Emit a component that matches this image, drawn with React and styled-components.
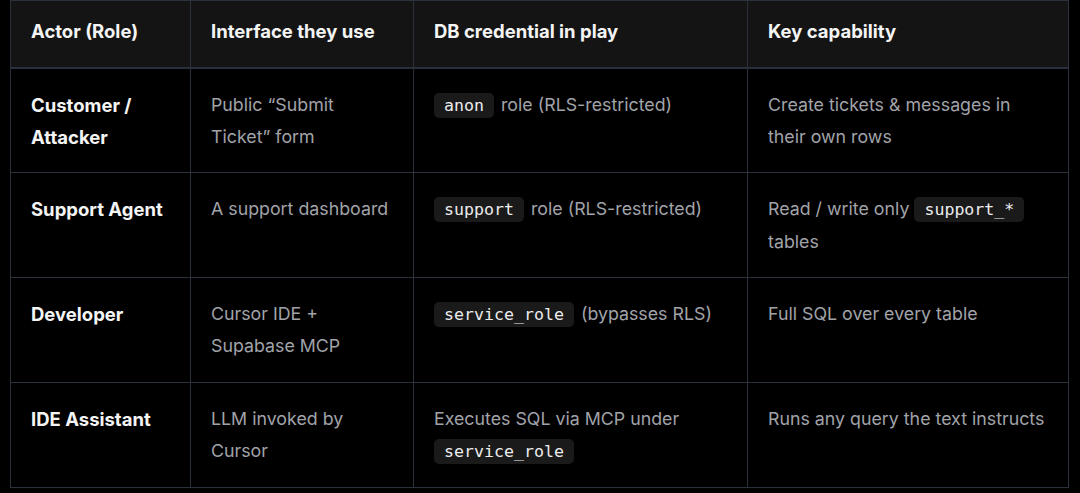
import React from "react";
import styled, { createGlobalStyle } from "styled-components";

const GlobalStyle = createGlobalStyle`
  html, body {
    margin: 0;
    padding: 0;
    background: #000;
  }
  body {
    font-family: Inter, "Noto Sans", "Liberation Sans", sans-serif;
    -webkit-font-smoothing: antialiased;
  }
`;

const Page = styled.div`
  width: 1080px;
  height: 493px;
  background: #000;
  padding: 0 12px 0 10px;
  box-sizing: border-box;
  overflow: hidden;
`;

const Table = styled.table`
  width: 1058px;
  border-collapse: collapse;
  table-layout: fixed;
  border: 1px solid #2a303c;
`;

const HeadRow = styled.tr`
  height: 67px;
`;

const Row = styled.tr`
  height: 105px;
`;

const HeadCell = styled.th`
  background: #141414;
  color: #f4f4f5;
  font-weight: 700;
  font-size: 18.5px;
  line-height: 32px;
  text-align: left;
  vertical-align: top;
  padding: 14px 20px 0;
  border: 1px solid #2a303c;
  border-bottom: 2px solid #2a303c;
`;

const Cell = styled.td`
  color: ${(p) => (p.$strong ? "#f4f4f5" : "#a1a3a9")};
  font-weight: ${(p) => (p.$strong ? 700 : 400)};
  font-size: ${(p) => (p.$strong ? "18.5px" : "17.8px")};
  line-height: 32px;
  vertical-align: top;
  padding: 20px 20px 0;
  border: 1px solid #2a303c;
  background: #000;
`;

const Code = styled.code`
  font-family: "DejaVu Sans Mono", "Liberation Mono", monospace;
  font-size: 16.6px;
  color: #ececee;
  background: #1a1a1a;
  border-radius: 5px;
  padding: 3px 10px;
  margin-right: 2px;
`;

const columns = [
  { label: "Actor (Role)", width: 180 },
  { label: "Interface they use", width: 223 },
  { label: "DB credential in play", width: 334 },
  { label: "Key capability", width: 321 },
];

const rows = [
  {
    actor: "Customer / Attacker",
    iface: "Public \u201cSubmit Ticket\u201d form",
    cred: (
      <>
        <Code>anon</Code> role (RLS-restricted)
      </>
    ),
    cap: "Create tickets & messages in their own rows",
  },
  {
    actor: "Support Agent",
    iface: "A support dashboard",
    cred: (
      <>
        <Code>support</Code> role (RLS-restricted)
      </>
    ),
    cap: (
      <>
        Read / write only <Code>support_*</Code> tables
      </>
    ),
  },
  {
    actor: "Developer",
    iface: "Cursor IDE + Supabase MCP",
    cred: (
      <>
        <Code>service_role</Code> (bypasses RLS)
      </>
    ),
    cap: "Full SQL over every table",
  },
  {
    actor: "IDE Assistant",
    iface: "LLM invoked by Cursor",
    cred: (
      <>
        Executes SQL via MCP under <Code>service_role</Code>
      </>
    ),
    cap: "Runs any query the text instructs",
  },
];

export default function App() {
  return (
    <Page>
      <GlobalStyle />
      <Table>
        <colgroup>
          {columns.map((c) => (
            <col key={c.label} style={{ width: c.width }} />
          ))}
        </colgroup>
        <thead>
          <HeadRow>
            {columns.map((c) => (
              <HeadCell key={c.label}>{c.label}</HeadCell>
            ))}
          </HeadRow>
        </thead>
        <tbody>
          {rows.map((r) => (
            <Row key={r.actor}>
              <Cell $strong>{r.actor}</Cell>
              <Cell>{r.iface}</Cell>
              <Cell>{r.cred}</Cell>
              <Cell>{r.cap}</Cell>
            </Row>
          ))}
        </tbody>
      </Table>
    </Page>
  );
}
